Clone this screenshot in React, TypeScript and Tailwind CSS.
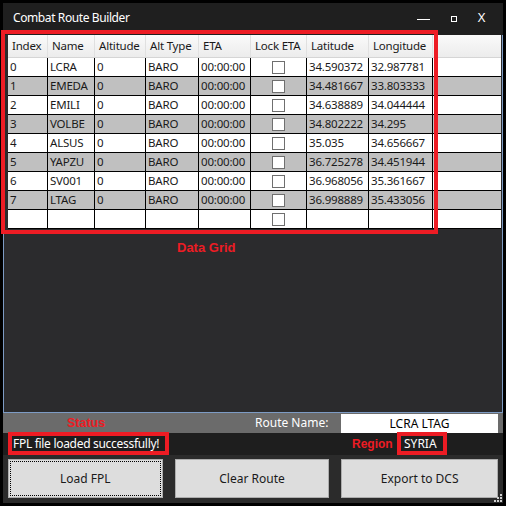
import { useState } from 'react';

const cols = [
  { name: 'Index', w: 'w-[40px]' },
  { name: 'Name', w: 'w-[47px]' },
  { name: 'Altitude', w: 'w-[51px]' },
  { name: 'Alt Type', w: 'w-[53px]' },
  { name: 'ETA', w: 'w-[52px]' },
  { name: 'Lock ETA', w: 'w-[56px]' },
  { name: 'Latitude', w: 'w-[62px]' },
  { name: 'Longitude', w: 'w-[64px]' },
];

const rows = [
  ['0', 'LCRA', '34.590372', '32.987781'],
  ['1', 'EMEDA', '34.481667', '33.803333'],
  ['2', 'EMILI', '34.638889', '34.044444'],
  ['3', 'VOLBE', '34.802222', '34.295'],
  ['4', 'ALSUS', '35.035', '34.656667'],
  ['5', 'YAPZU', '36.725278', '34.451944'],
  ['6', 'SV001', '36.968056', '35.361667'],
  ['7', 'LTAG', '36.998889', '35.433056'],
];

function Check() {
  return <div className="w-[13px] h-[13px] bg-white border border-[#6f6f6f]" />;
}

function Row({ r, alt }: { r: string[] | null; alt: boolean }) {
  const bg = alt ? 'bg-[#c0c0c0]' : 'bg-white';
  const cells = r ? [r[0], r[1], '0', 'BARO', '00:00:00', '', r[2], r[3]] : ['', '', '', '', '', '', '', ''];
  return (
    <div className={`flex h-[19px] border-b border-black ${bg}`}>
      {cols.map((c, i) => (
        <div key={c.name} className={`${c.w} shrink-0 border-r border-black flex items-center ${i === 5 ? 'justify-center' : 'pl-[2px]'} overflow-hidden whitespace-nowrap`}>
          {i === 5 ? <Check /> : cells[i]}
        </div>
      ))}
      <div className="flex-1" />
    </div>
  );
}

export default function App() {
  const [route, setRoute] = useState('LCRA LTAG');

  return (
    <div className="relative w-[506px] h-[506px] bg-black p-[3px] flex flex-col text-[11.5px] tracking-[-0.2px] text-[#1a1a1a] font-[family-name:'Noto_Sans',sans-serif]">
      {/* title bar */}
      <div className="h-[32px] bg-[#1f1f1f] flex items-center text-white text-[12px] tracking-[-0.4px]">
        <span className="ml-[10px] -mt-[2px]">Combat Route Builder</span>
        <div className="ml-auto flex items-center h-full">
          <div className="w-[13px] h-[1px] bg-white mr-[21px]" />
          <div className="w-[6px] h-[6px] border border-white mr-[21px]" />
          <span className="mr-[18px] text-[13px] -mt-[2px]">X</span>
        </div>
      </div>

      {/* grid panel */}
      <div className="h-[378px] bg-[#2b2b2d] border-x border-b border-[#7d9bc4] pl-[4px] pr-[1px]">
        <div className="flex h-[23px] bg-gradient-to-b from-[#fafafa] to-[#ececec] border-b border-[#d5d5d5] text-[#1a1a1a]">
          {cols.map((c) => (
            <div key={c.name} className={`${c.w} shrink-0 border-r border-[#e0e0e0] flex items-center pl-[4px] whitespace-nowrap`}>
              {c.name}
            </div>
          ))}
          <div className="flex-1" />
        </div>
        {rows.map((r, i) => (
          <Row key={r[0]} r={r} alt={i % 2 === 1} />
        ))}
        <Row r={null} alt={false} />
      </div>

      <div className="flex flex-col flex-1 text-[12px] tracking-normal">
        {/* route name bar */}
        <div className="h-[20px] bg-[#6b6b6b] flex items-center text-white">
          <span className="ml-[252px]">Route Name:</span>
          <input
            value={route}
            onChange={(e) => setRoute(e.target.value)}
            className="ml-auto mr-[5px] w-[157px] h-[19px] bg-white text-black text-center outline-none"
          />
        </div>

        {/* status bar */}
        <div className="h-[22px] bg-[#1e1e1e] flex items-center text-white">
          <span className="ml-[10px] w-[391px] tracking-[-0.3px]">FPL file loaded successfully!</span>
          <span>SYRIA</span>
        </div>

        {/* buttons */}
        <div className="flex-1 bg-[#2b2b2b] flex gap-[12px] px-[5px] pt-[4px] relative text-[#1a1a1a]">
          <button className="w-[155px] h-[39px] bg-[#dddddd] border border-[#adadad] outline-1 outline-dotted outline-offset-[-3px] outline-black">Load FPL</button>
          <button className="w-[155px] h-[39px] bg-[#dddddd] border border-[#adadad]">Clear Route</button>
          <button className="w-[157px] h-[39px] bg-[#dddddd] border border-[#adadad]">Export to DCS</button>
          <div className="absolute right-0 bottom-0 grid grid-cols-3 gap-[1px] p-[1px]">
            <span />
            <span />
            <span className="w-[2px] h-[2px] bg-[#cfcfcf]" />
            <span />
            <span className="w-[2px] h-[2px] bg-[#cfcfcf]" />
            <span className="w-[2px] h-[2px] bg-[#cfcfcf]" />
            <span className="w-[2px] h-[2px] bg-[#cfcfcf]" />
            <span className="w-[2px] h-[2px] bg-[#cfcfcf]" />
            <span className="w-[2px] h-[2px] bg-[#cfcfcf]" />
          </div>
        </div>
      </div>

      {/* annotations */}
      <div className="absolute left-[1px] top-[30px] w-[437px] h-[204px] border-4 border-[#ed1c24]" />
      <div className="absolute left-[177px] top-[238px] text-[13px] tracking-normal font-bold text-[#ed1c24] font-[family-name:'Liberation_Sans',sans-serif]">Data Grid</div>
      <div className="absolute left-[67px] top-[414px] text-[12.5px] tracking-normal font-bold text-[#ed1c24] font-[family-name:'Liberation_Sans',sans-serif]">Status</div>
      <div className="absolute left-[8px] top-[432px] w-[161px] h-[23px] border-4 border-[#ed1c24]" />
      <div className="absolute left-[352px] top-[435px] text-[12px] tracking-normal font-bold text-[#ed1c24] font-[family-name:'Liberation_Sans',sans-serif]">Region</div>
      <div className="absolute left-[397px] top-[432px] w-[50px] h-[23px] border-4 border-[#ed1c24]" />
    </div>
  );
}
